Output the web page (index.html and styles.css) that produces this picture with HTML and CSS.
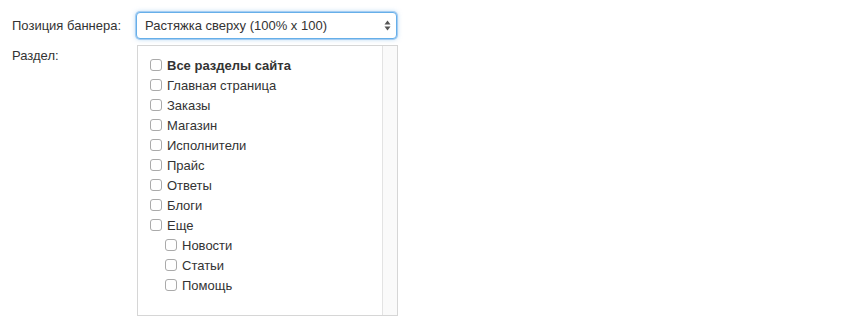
FILE: index.html
```html
<!DOCTYPE html>
<html lang="ru">
  <head>
    <meta charset="UTF-8" />
    <title>Баннер</title>
    <link rel="stylesheet" href="styles.css">
  </head>
  <body>
    <div class="form">
      <div class="row">
        <label class="caption" for="position">Позиция баннера:</label>
        <div class="select">
          <span>Растяжка сверху (100% x 100)</span>
          <svg class="arrows" width="7" height="11" viewBox="0 0 7 11">
            <path d="M3.5 0.5 L6.5 4.5 L0.5 4.5 Z" fill="#555" />
            <path d="M3.5 10.5 L6.5 6.5 L0.5 6.5 Z" fill="#555" />
          </svg>
        </div>
      </div>
      <div class="row">
        <span class="caption top">Раздел:</span>
        <div class="sections">
          <ul class="list">
            <li class="bold"><span class="box"></span>Все разделы сайта</li>
            <li><span class="box"></span>Главная страница</li>
            <li><span class="box"></span>Заказы</li>
            <li><span class="box"></span>Магазин</li>
            <li><span class="box"></span>Исполнители</li>
            <li><span class="box"></span>Прайс</li>
            <li><span class="box"></span>Ответы</li>
            <li><span class="box"></span>Блоги</li>
            <li><span class="box"></span>Еще</li>
            <li class="sub"><span class="box"></span>Новости</li>
            <li class="sub"><span class="box"></span>Статьи</li>
            <li class="sub"><span class="box"></span>Помощь</li>
          </ul>
          <div class="track"></div>
        </div>
      </div>
    </div>
  </body>
</html>
```

FILE: styles.css
```css
body {
  margin: 0;
  padding: 12px;
  font-family: "Liberation Sans", Arial, sans-serif;
  font-size: 13px;
  color: #333;
  background: #fff;
}
.form {
  display: flex;
  flex-direction: column;
  gap: 6px;
}
.row {
  display: flex;
}
.caption {
  width: 124px;
  align-self: center;
}
.caption.top {
  align-self: flex-start;
  padding-top: 3px;
}
.select {
  box-sizing: border-box;
  width: 261px;
  height: 27px;
  display: flex;
  align-items: center;
  justify-content: space-between;
  padding: 0 5px 0 8px;
  border: 1px solid #66afe9;
  border-radius: 4px;
  box-shadow: 0 0 0 1px #a6cdf2, 0 0 5px rgba(102, 175, 233, 0.6);
  background: #fff;
}
.sections {
  box-sizing: border-box;
  margin-left: 1px;
  width: 261px;
  height: 271px;
  display: flex;
  border: 1px solid #d6d6d6;
}
.list {
  flex: 1;
  list-style: none;
  margin: 0;
  padding: 9px 0 0 12px;
}
.list li {
  height: 20px;
  display: flex;
  align-items: center;
}
.list li.bold {
  font-weight: bold;
}
.list li.sub {
  padding-left: 15px;
}
.box {
  box-sizing: border-box;
  width: 12px;
  height: 12px;
  margin-right: 5px;
  border: 1px solid #aaa;
  border-radius: 3px;
  background: #fff;
}
.track {
  width: 14px;
  border-left: 1px solid #e3e3e3;
  background: #fafafa;
}
```
